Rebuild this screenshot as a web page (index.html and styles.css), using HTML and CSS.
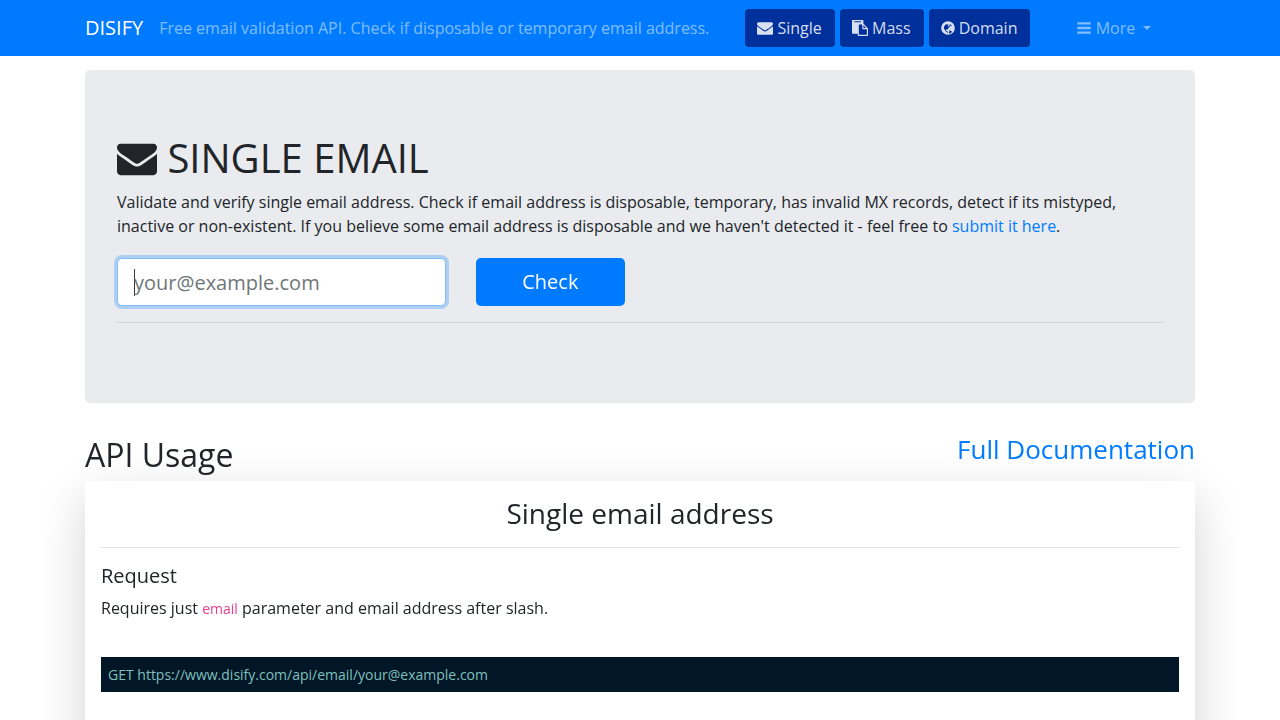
FILE: index.html
```html
<!DOCTYPE html>
<html lang="en">
<head>
<meta charset="utf-8">
<meta name="viewport" content="width=device-width, initial-scale=1">
<title>Disify</title>
<link rel="stylesheet" href="styles.css">
</head>
<body>
<svg class="sprite" aria-hidden="true">
  <symbol id="envelope" viewBox="0 0 1792 1792"><path d="M1792 710v794q0 66-47 113t-113 47h-1472q-66 0-113-47t-47-113v-794q44 49 101 87 362 246 497 345 57 42 92.500 65.500t94.500 48 110 24.500h2q51 0 110-24.500t94.500-48 92.500-65.500q170-123 498-345 57-39 100-87zm0-294q0 79-49 151t-122 123q-376 261-468 325-10 7-42.500 31t-54 38.500-52 32.500-57.500 27-50 9h-2q-23 0-50-9t-57.500-27-52-32.500-54-38.500-42.500-31q-91-64-262-182.500t-205-142.500q-62-42-117-115.500t-55-136.500q0-78 41.500-130t118.500-52h1472q65 0 112.500 47t47.500 113z"/></symbol>
  <symbol id="paste" viewBox="0 0 1792 1792"><path d="M768 1664h896v-640h-416q-40 0-68-28t-28-68v-416h-384v1152zm256-1440v-64q0-13-9.500-22.500t-22.500-9.500h-704q-13 0-22.500 9.500t-9.500 22.500v64q0 13 9.500 22.500t22.500 9.500h704q13 0 22.500-9.500t9.500-22.500zm256 672h299l-299-299v299zm512 128v672q0 40-28 68t-68 28h-960q-40 0-68-28t-28-68v-160h-544q-40 0-68-28t-28-68v-1344q0-40 28-68t68-28h1088q40 0 68 28t28 68v328q21 13 36 28l408 408q28 28 48 76t20 88z"/></symbol>
  <symbol id="globe" viewBox="128 0 1536 1792"><path fill-rule="evenodd" d="M896 128a768 768 0 1 0 0 1536a768 768 0 1 0 0-1536zM1240 640l-70 20-50 60-50 70-80 60-30 70-80 50-10 60 10 60-50-30-60-20-70 20-30 60 10 80 50 30 60-30 10 60 50 40 10 70 60 20-40 50-60-20-80-80-100-70-50-90-90-110-50-110-20-110 20-90 30-60q90-140 230-220l60-10 60 30 60-30 70 20-10 60-60 60-10 60 60 20 40 50 30-20 0-60 60-20 30-70-20-60 40-30 70 30 50 60 40 50 50 20 20 50zM1007 1526l-20-60 20-70 30-60-10-110 50-50 60-10 70 40 80 50 61 81q-145 153-341 189z"/></symbol>
  <symbol id="bars" viewBox="128 0 1536 1792"><path d="M1664 1344v128q0 26-19 45t-45 19h-1408q-26 0-45-19t-19-45v-128q0-26 19-45t45-19h1408q26 0 45 19t19 45zm0-512v128q0 26-19 45t-45 19h-1408q-26 0-45-19t-19-45v-128q0-26 19-45t45-19h1408q26 0 45 19t19 45zm0-512v128q0 26-19 45t-45 19h-1408q-26 0-45-19t-19-45v-128q0-26 19-45t45-19h1408q26 0 45 19t19 45z"/></symbol>
</svg>
<header class="navbar">
  <div class="container navbar-inner">
    <a class="brand" href="#">DISIFY</a>
    <span class="tagline">Free email validation API. Check if disposable or temporary email address.</span>
    <nav class="nav">
      <div class="nav-buttons">
        <a class="nav-button" href="#single"><svg class="icon" aria-hidden="true"><use href="#envelope"/></svg> Single</a>
        <a class="nav-button" href="#mass"><svg class="icon" aria-hidden="true"><use href="#paste"/></svg> Mass</a>
        <a class="nav-button" href="#domain"><svg class="icon icon-narrow" aria-hidden="true"><use href="#globe"/></svg> Domain</a>
      </div>
      <button class="more" type="button" aria-haspopup="true"><svg class="icon icon-narrow" aria-hidden="true"><use href="#bars"/></svg> More <span class="arrow"></span></button>
    </nav>
  </div>
</header>
<main class="container">
  <section class="hero" id="single">
    <h1 class="hero-title"><svg class="icon icon-large" aria-hidden="true"><use href="#envelope"/></svg> SINGLE EMAIL</h1>
    <p class="hero-text">Validate and verify single email address. Check if email address is disposable, temporary, has invalid MX records, detect if its mistyped, inactive or non-existent. If you believe some email address is disposable and we haven't detected it - feel free to <a class="link" href="#submit">submit it here</a>.</p>
    <form class="form">
      <input class="email" type="email" placeholder="your@example.com" aria-label="Email address" autofocus>
      <button class="check" type="submit">Check</button>
    </form>
    <hr class="rule">
  </section>
  <div class="usage-head">
    <h2 class="usage-title">API Usage</h2>
    <a class="link docs" href="#docs">Full Documentation</a>
  </div>
  <section class="card">
    <h3 class="card-title">Single email address</h3>
    <hr class="rule">
    <h4 class="card-subtitle">Request</h4>
    <p class="card-text">Requires just <code class="param">email</code> parameter and email address after slash.</p>
    <pre class="snippet"><code class="snippet-code">GET https://www.disify.com/api/email/your@example.com</code></pre>
  </section>
</main>
</body>
</html>
```
FILE: styles.css
```css
* { box-sizing: border-box; }

body {
  margin: 0;
  padding-top: 70px;
  background: #fff;
  color: #212529;
  font-family: "Open Sans", sans-serif;
  font-size: 16px;
  line-height: 24px;
}

h1, h2, h3, h4, p, pre { margin: 0; font-weight: 400; }

.sprite { position: absolute; width: 0; height: 0; }

.container {
  max-width: 1140px;
  margin: 0 auto;
  padding: 0 15px;
}

.link { color: #007bff; text-decoration: none; }

.icon {
  width: 16px;
  height: 16px;
  fill: currentColor;
  vertical-align: -2px;
}
.icon-narrow { width: 14px; }
.icon-large { width: 40px; height: 40px; vertical-align: -5px; }

.navbar {
  position: fixed;
  top: 0;
  left: 0;
  right: 0;
  z-index: 10;
  background: #007bff;
}
.navbar-inner {
  display: flex;
  align-items: center;
  min-height: 56px;
  white-space: nowrap;
}
.brand {
  margin-right: 16px;
  color: #fff;
  font-size: 20px;
  line-height: 30px;
  text-decoration: none;
}
.tagline { color: rgba(255, 255, 255, 0.5); }
.nav { display: flex; align-items: center; margin-left: 36px; }
.nav-buttons { display: flex; gap: 5px; }
.nav-button {
  padding: 7px 13px 7px 12px;
  border-radius: 4px;
  background: #00309c;
  color: rgba(255, 255, 255, 0.85);
  text-decoration: none;
}
.more {
  margin-left: 47px;
  padding: 0;
  border: 0;
  background: none;
  color: rgba(255, 255, 255, 0.5);
  font: inherit;
}
.arrow {
  display: inline-block;
  margin-left: 4px;
  vertical-align: 4px;
  border: 4px solid transparent;
  border-top-color: currentColor;
  border-bottom: 0;
}

.hero {
  margin-bottom: 32px;
  padding: 64px 32px;
  border-radius: 5px;
  background: #e9ebee;
}
.hero-title { margin-bottom: 8px; font-size: 40px; line-height: 48px; }
.hero-text { margin-bottom: 20px; }
.form {
  display: grid;
  grid-template-columns: repeat(12, 1fr);
  column-gap: 30px;
}
.email {
  grid-column: span 4;
  min-width: 0;
  height: 48px;
  padding: 8px 16px;
  border: 1px solid #80bdff;
  border-radius: 5px;
  outline: 0;
  background: #fff;
  box-shadow: 0 0 0 3px rgba(0, 123, 255, 0.25);
  color: #495057;
  font: inherit;
  font-size: 20px;
}
.email::placeholder { color: #6f7678; opacity: 1; }
/* Steady caret while the field is empty */
.email:placeholder-shown {
  caret-color: transparent;
  background: #fff linear-gradient(#343a40, #343a40) 16px center / 1px 27px no-repeat;
}
.check {
  grid-column: span 2;
  height: 48px;
  border: 0;
  border-radius: 5px;
  background: #007bff;
  color: #fff;
  font: inherit;
  font-size: 20px;
}
.rule {
  margin: 16px 0;
  border: 0;
  border-top: 1px solid rgba(0, 0, 0, 0.1);
}

.usage-head {
  display: flex;
  justify-content: space-between;
  align-items: flex-start;
}
.usage-title { margin-bottom: 6px; font-size: 32px; line-height: 40px; }
.docs { font-size: 26px; line-height: 28px; }

.card {
  padding: 16px 16px 64px;
  border-radius: 4px;
  background: #fff;
  box-shadow: 0 16px 48px rgba(0, 0, 0, 0.175);
}
.card-title { padding-bottom: 2px; font-size: 28px; line-height: 32px; text-align: center; }
.card-subtitle { margin-bottom: 8px; font-size: 20px; line-height: 24px; }
.card-text { margin-bottom: 36px; }
.param { color: #e83e8c; font-family: inherit; font-size: 14px; }
.snippet {
  padding: 7px;
  overflow: auto;
  background: #011627;
  color: #7fc1bd;
  line-height: 21px;
}
.snippet-code { font-family: "Open Sans", sans-serif; font-size: 14px; }
```
